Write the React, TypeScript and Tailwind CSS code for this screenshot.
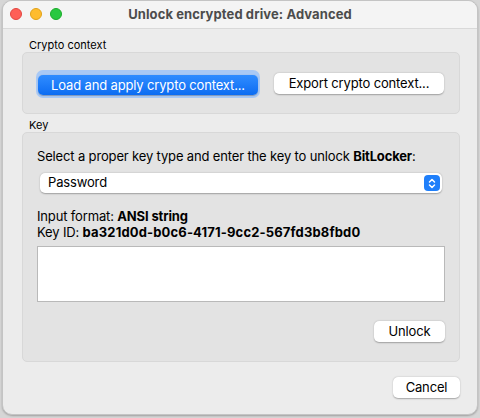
import React from "react";

const font = { fontFamily: "Inter, 'Liberation Sans', sans-serif" };

export default function App() {
  return (
    <div className="w-[480px] h-[418px] bg-[#d6d6d6] overflow-hidden" style={font}>
      <div className="ml-[2px] w-[476px] h-[415px] rounded-[10px] bg-[#ececec] border border-[#c4c4c4] overflow-hidden flex flex-col shadow-[0_1px_2px_rgba(0,0,0,0.25)]">
        {/* Title bar */}
        <div className="relative h-[28px] shrink-0 bg-[#f4f4f4] border-b border-[#d9d9d9] flex items-center justify-center">
          <div className="absolute left-[7px] top-[7px] flex gap-[8px]">
            <span className="w-[12px] h-[12px] rounded-full bg-[#fe5f57] border border-[#e2463f]" />
            <span className="w-[12px] h-[12px] rounded-full bg-[#febc2e] border border-[#e1a116]" />
            <span className="w-[12px] h-[12px] rounded-full bg-[#28c840] border border-[#1aab29]" />
          </div>
          <span className="text-[13px] font-bold text-[#4c4c4c] tracking-[0.1px]">Unlock encrypted drive: Advanced</span>
        </div>

        <div className="flex flex-col pl-[19px] pr-[17px] pt-[9px] tracking-[-0.15px]">
          {/* Crypto context */}
          <div className="text-[11px] text-black leading-[14px] pl-[7px] tracking-normal">Crypto context</div>
          <div className="h-[62px] rounded-[5px] bg-[#e3e3e3] border border-[#d8d8d8] flex items-center gap-[14px] pl-[13px] pt-[1px]">
            <div className="rounded-[7px] p-[2px] bg-[#a9c9f5]">
              <button className="h-[20px] w-[220px] rounded-[5px] bg-gradient-to-b from-[#2f8cff] to-[#0a6cf2] text-white text-[13px] leading-[20px] shadow-[0_0.5px_1px_rgba(0,0,0,0.25)]">
                Load and apply crypto context...
              </button>
            </div>
            <button className="h-[21px] w-[170px] rounded-[5px] bg-white text-black text-[13px] leading-[21px] shadow-[0_0.5px_1.5px_rgba(0,0,0,0.3)]">
              Export crypto context...
            </button>
          </div>

          {/* Key */}
          <div className="mt-[4px] text-[11px] text-black leading-[14px] pl-[7px] tracking-normal">Key</div>
          <div className="h-[230px] rounded-[5px] bg-[#e3e3e3] border border-[#d8d8d8] flex flex-col px-[14px] pt-[15px]">
            <div className="text-[13px] text-black leading-[16px]">
              Select a proper key type and enter the key to unlock <span className="font-bold">BitLocker</span>:
            </div>
            <div className="mt-[9px] mx-[3px] h-[20px] rounded-[5px] bg-white shadow-[0_0.5px_1.5px_rgba(0,0,0,0.3)] flex items-center justify-between pl-[8px] pr-[2px]">
              <span className="text-[13px] text-black">Password</span>
              <span className="w-[16px] h-[16px] rounded-[4px] bg-[#1f7ffa] flex items-center justify-center">
                <svg width="8" height="11" viewBox="0 0 8 11" fill="none" stroke="white" strokeWidth="1.5" strokeLinecap="round" strokeLinejoin="round">
                  <path d="M1.5 4 L4 1.5 L6.5 4" />
                  <path d="M1.5 7 L4 9.5 L6.5 7" />
                </svg>
              </span>
            </div>
            <div className="mt-[15px] text-[13px] text-black leading-[16px]">
              Input format: <span className="font-bold">ANSI string</span>
            </div>
            <div className="text-[13px] text-black leading-[16px]">
              Key ID: <span className="font-bold tracking-[0.15px]">ba321d0d-b0c6-4171-9cc2-567fd3b8fbd0</span>
            </div>
            <div className="mt-[6px] h-[56px] bg-white border border-[#b9b9b9]" />
            <div className="mt-[19px] flex justify-end">
              <button className="h-[21px] w-[71px] rounded-[5px] bg-white text-black text-[13px] leading-[21px] shadow-[0_0.5px_1.5px_rgba(0,0,0,0.3)]">
                Unlock
              </button>
            </div>
          </div>

          <div className="mt-[15px] flex justify-end">
            <button className="h-[21px] w-[67px] rounded-[5px] bg-white text-black text-[13px] leading-[21px] shadow-[0_0.5px_1.5px_rgba(0,0,0,0.3)]">
              Cancel
            </button>
          </div>
        </div>
      </div>
    </div>
  );
}
